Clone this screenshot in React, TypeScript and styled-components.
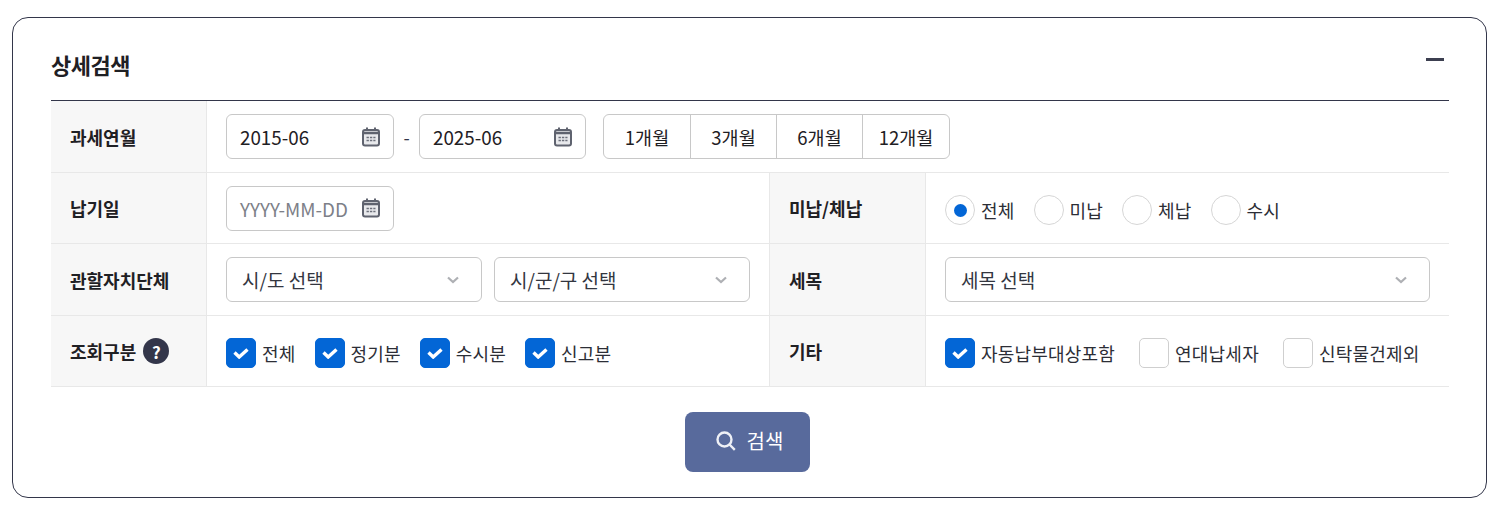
import React from "react";
import styled, { createGlobalStyle } from "styled-components";

const GlobalStyle = createGlobalStyle`
  html, body {
    margin: 0;
    background: #fff;
    font-family: "Noto Sans CJK KR", "Noto Sans", sans-serif;
    color: #1f2024;
  }
  * { box-sizing: border-box; }
`;

const Page = styled.div`
  padding: 17px 9px 13px 12px;
`;

const Card = styled.section`
  height: 481px;
  border: 1px solid #33364a;
  border-radius: 16px;
  padding: 0 37px 0 38px;
`;

const Head = styled.div`
  height: 82px;
  display: flex;
  justify-content: space-between;
  padding-top: 28px;
`;

const Title = styled.h2`
  margin: 0;
  font-size: 22px;
  line-height: 36px;
  font-weight: 700;
  letter-spacing: -0.5px;
  color: #1f2024;
`;

const Collapse = styled.button`
  width: 18px;
  height: 3px;
  margin: 12px 5px 0 0;
  padding: 0;
  border: 0;
  background: #3c3f50;
`;

const Table = styled.div`
  border-top: 1px solid #33364a;
`;

const Row = styled.div<{ $h: number }>`
  display: grid;
  grid-template-columns: 156px 562px 157px 1fr;
  height: ${(p) => p.$h}px;
  border-bottom: 1px solid #e8e8e8;
`;

const Label = styled.div`
  display: flex;
  align-items: center;
  gap: 7px;
  padding-left: 19px;
  background: #f7f7f7;
  border-right: 1px solid #e8e8e8;
  font-size: 18px;
  font-weight: 700;
`;

const SideLabel = styled(Label)`
  border-left: 1px solid #e8e8e8;
`;

const Cell = styled.div<{ $wide?: boolean }>`
  display: flex;
  align-items: center;
  padding: 0 19px;
  ${(p) => (p.$wide ? "grid-column: 2 / 5;" : "")}
`;

const DateBox = styled.div<{ $w: number }>`
  width: ${(p) => p.$w}px;
  height: 45px;
  display: flex;
  align-items: center;
  justify-content: space-between;
  padding: 0 13px 0 13px;
  border: 1px solid #c8c8c8;
  border-radius: 6px;
  font-size: 18.8px;
  color: #1f2024;
`;

const Placeholder = styled.span`
  color: #7d8088;
  padding-top: 1px;
`;

const Dash = styled.span`
  width: 25px;
  text-align: center;
  font-size: 18px;
  color: #33364a;
`;

const Periods = styled.div`
  display: flex;
  margin-left: 17px;
  height: 45px;
  border: 1px solid #c8c8c8;
  border-radius: 6px;
`;

const Period = styled.button<{ $w: number }>`
  width: ${(p) => p.$w}px;
  padding: 0;
  border: 0;
  border-left: 1px solid #c8c8c8;
  background: none;
  font: inherit;
  font-size: 18.5px;
  color: #1f2024;
  &:first-child { border-left: 0; }
`;

const SelectBox = styled.div<{ $w: number }>`
  width: ${(p) => p.$w}px;
  height: 45px;
  display: flex;
  align-items: center;
  justify-content: space-between;
  padding: 0 22px 0 15px;
  border: 1px solid #c8c8c8;
  border-radius: 6px;
  font-size: 19px;
  color: #33363f;
`;

const Selects = styled.div`
  display: flex;
  gap: 12px;
`;

const Options = styled.div<{ $gap: number }>`
  display: flex;
  align-items: center;
  gap: ${(p) => p.$gap}px;
  padding-top: 4px;
`;

const Option = styled.label`
  display: flex;
  align-items: center;
  gap: 6px;
  font-size: 18px;
  letter-spacing: 0.2px;
  color: #2c2e36;
`;

const Radio = styled.span<{ $on?: boolean }>`
  width: 30px;
  height: 30px;
  display: flex;
  align-items: center;
  justify-content: center;
  border: 1.5px solid #d6d6d6;
  border-radius: 50%;
  &::after {
    content: "";
    width: 13px;
    height: 13px;
    border-radius: 50%;
    background: ${(p) => (p.$on ? "#0366d6" : "transparent")};
  }
`;

const Check = styled.span<{ $on?: boolean }>`
  width: 30px;
  height: 30px;
  display: flex;
  align-items: center;
  justify-content: center;
  border-radius: 5px;
  border: 1px solid ${(p) => (p.$on ? "#0366d6" : "#cfcfcf")};
  background: ${(p) => (p.$on ? "#0366d6" : "#fff")};
`;

const Help = styled.span`
  width: 26px;
  height: 26px;
  display: flex;
  align-items: center;
  justify-content: center;
  border-radius: 50%;
  background: #33364a;
  color: #fff;
  font-size: 17px;
`;

const Actions = styled.div`
  display: flex;
  justify-content: center;
  padding: 25px 5px 0 0;
`;

const SearchButton = styled.button`
  width: 125px;
  height: 60px;
  display: flex;
  align-items: center;
  justify-content: center;
  gap: 11px;
  padding: 0 0 3px 4px;
  border: 0;
  border-radius: 8px;
  background: #586a9c;
  color: #fff;
  font: inherit;
  font-size: 20px;
`;

const CalendarIcon = () => (
  <svg width="18" height="20" viewBox="0 0 18 20" fill="none">
    <path d="M5 0.5v4M13 0.5v4" stroke="#5f636f" strokeWidth="2" />
    <rect x="1" y="3" width="16" height="15.5" rx="2" fill="#e8e9ec" stroke="#5f636f" strokeWidth="2" />
    <path d="M1 6h16" stroke="#5f636f" strokeWidth="2.5" />
    <path d="M4.5 10.5h9M4.5 13.5h9" stroke="#6c707b" strokeWidth="1.6" strokeDasharray="2.4 1" />
  </svg>
);

const ChevronIcon = () => (
  <svg width="12" height="8" viewBox="0 0 12 8" fill="none">
    <path d="M1 1.5 6 6l5-4.5" stroke="#aeb0b4" strokeWidth="2.2" />
  </svg>
);

const TickIcon = () => (
  <svg width="16" height="11" viewBox="0 0 16 11" fill="none">
    <path d="M1.5 4.5 6.2 9 14.5 1.5" stroke="#fff" strokeWidth="3.4" />
  </svg>
);

const SearchIcon = () => (
  <svg width="20" height="20" viewBox="0 0 20 20" fill="none">
    <circle cx="8.5" cy="8.5" r="7" stroke="#eef0f6" strokeWidth="2.4" />
    <path d="m13.5 13.5 5.3 5.3" stroke="#eef0f6" strokeWidth="2.4" />
  </svg>
);

export default function App() {
  return (
    <Page>
      <GlobalStyle />
      <Card>
        <Head>
          <Title>상세검색</Title>
          <Collapse aria-label="접기" />
        </Head>
        <Table>
          <Row $h={72}>
            <Label>과세연월</Label>
            <Cell $wide>
              <DateBox $w={168}>2015-06<CalendarIcon /></DateBox>
              <Dash>-</Dash>
              <DateBox $w={167}>2025-06<CalendarIcon /></DateBox>
              <Periods>
                <Period $w={86}>1개월</Period>
                <Period $w={86}>3개월</Period>
                <Period $w={86}>6개월</Period>
                <Period $w={87}>12개월</Period>
              </Periods>
            </Cell>
          </Row>
          <Row $h={71}>
            <Label>납기일</Label>
            <Cell>
              <DateBox $w={168}><Placeholder>YYYY-MM-DD</Placeholder><CalendarIcon /></DateBox>
            </Cell>
            <SideLabel>미납/체납</SideLabel>
            <Cell>
              <Options $gap={19}>
                <Option><Radio $on />전체</Option>
                <Option><Radio />미납</Option>
                <Option><Radio />체납</Option>
                <Option><Radio />수시</Option>
              </Options>
            </Cell>
          </Row>
          <Row $h={72}>
            <Label>관할자치단체</Label>
            <Cell>
              <Selects>
                <SelectBox $w={256}>시/도 선택<ChevronIcon /></SelectBox>
                <SelectBox $w={256}>시/군/구 선택<ChevronIcon /></SelectBox>
              </Selects>
            </Cell>
            <SideLabel>세목</SideLabel>
            <Cell>
              <SelectBox $w={485}>세목 선택<ChevronIcon /></SelectBox>
            </Cell>
          </Row>
          <Row $h={71}>
            <Label>조회구분<Help>?</Help></Label>
            <Cell>
              <Options $gap={19}>
                <Option><Check $on><TickIcon /></Check>전체</Option>
                <Option><Check $on><TickIcon /></Check>정기분</Option>
                <Option><Check $on><TickIcon /></Check>수시분</Option>
                <Option><Check $on><TickIcon /></Check>신고분</Option>
              </Options>
            </Cell>
            <SideLabel>기타</SideLabel>
            <Cell>
              <Options $gap={24}>
                <Option><Check $on><TickIcon /></Check>자동납부대상포함</Option>
                <Option><Check />연대납세자</Option>
                <Option><Check />신탁물건제외</Option>
              </Options>
            </Cell>
          </Row>
        </Table>
        <Actions>
          <SearchButton><SearchIcon />검색</SearchButton>
        </Actions>
      </Card>
    </Page>
  );
}
